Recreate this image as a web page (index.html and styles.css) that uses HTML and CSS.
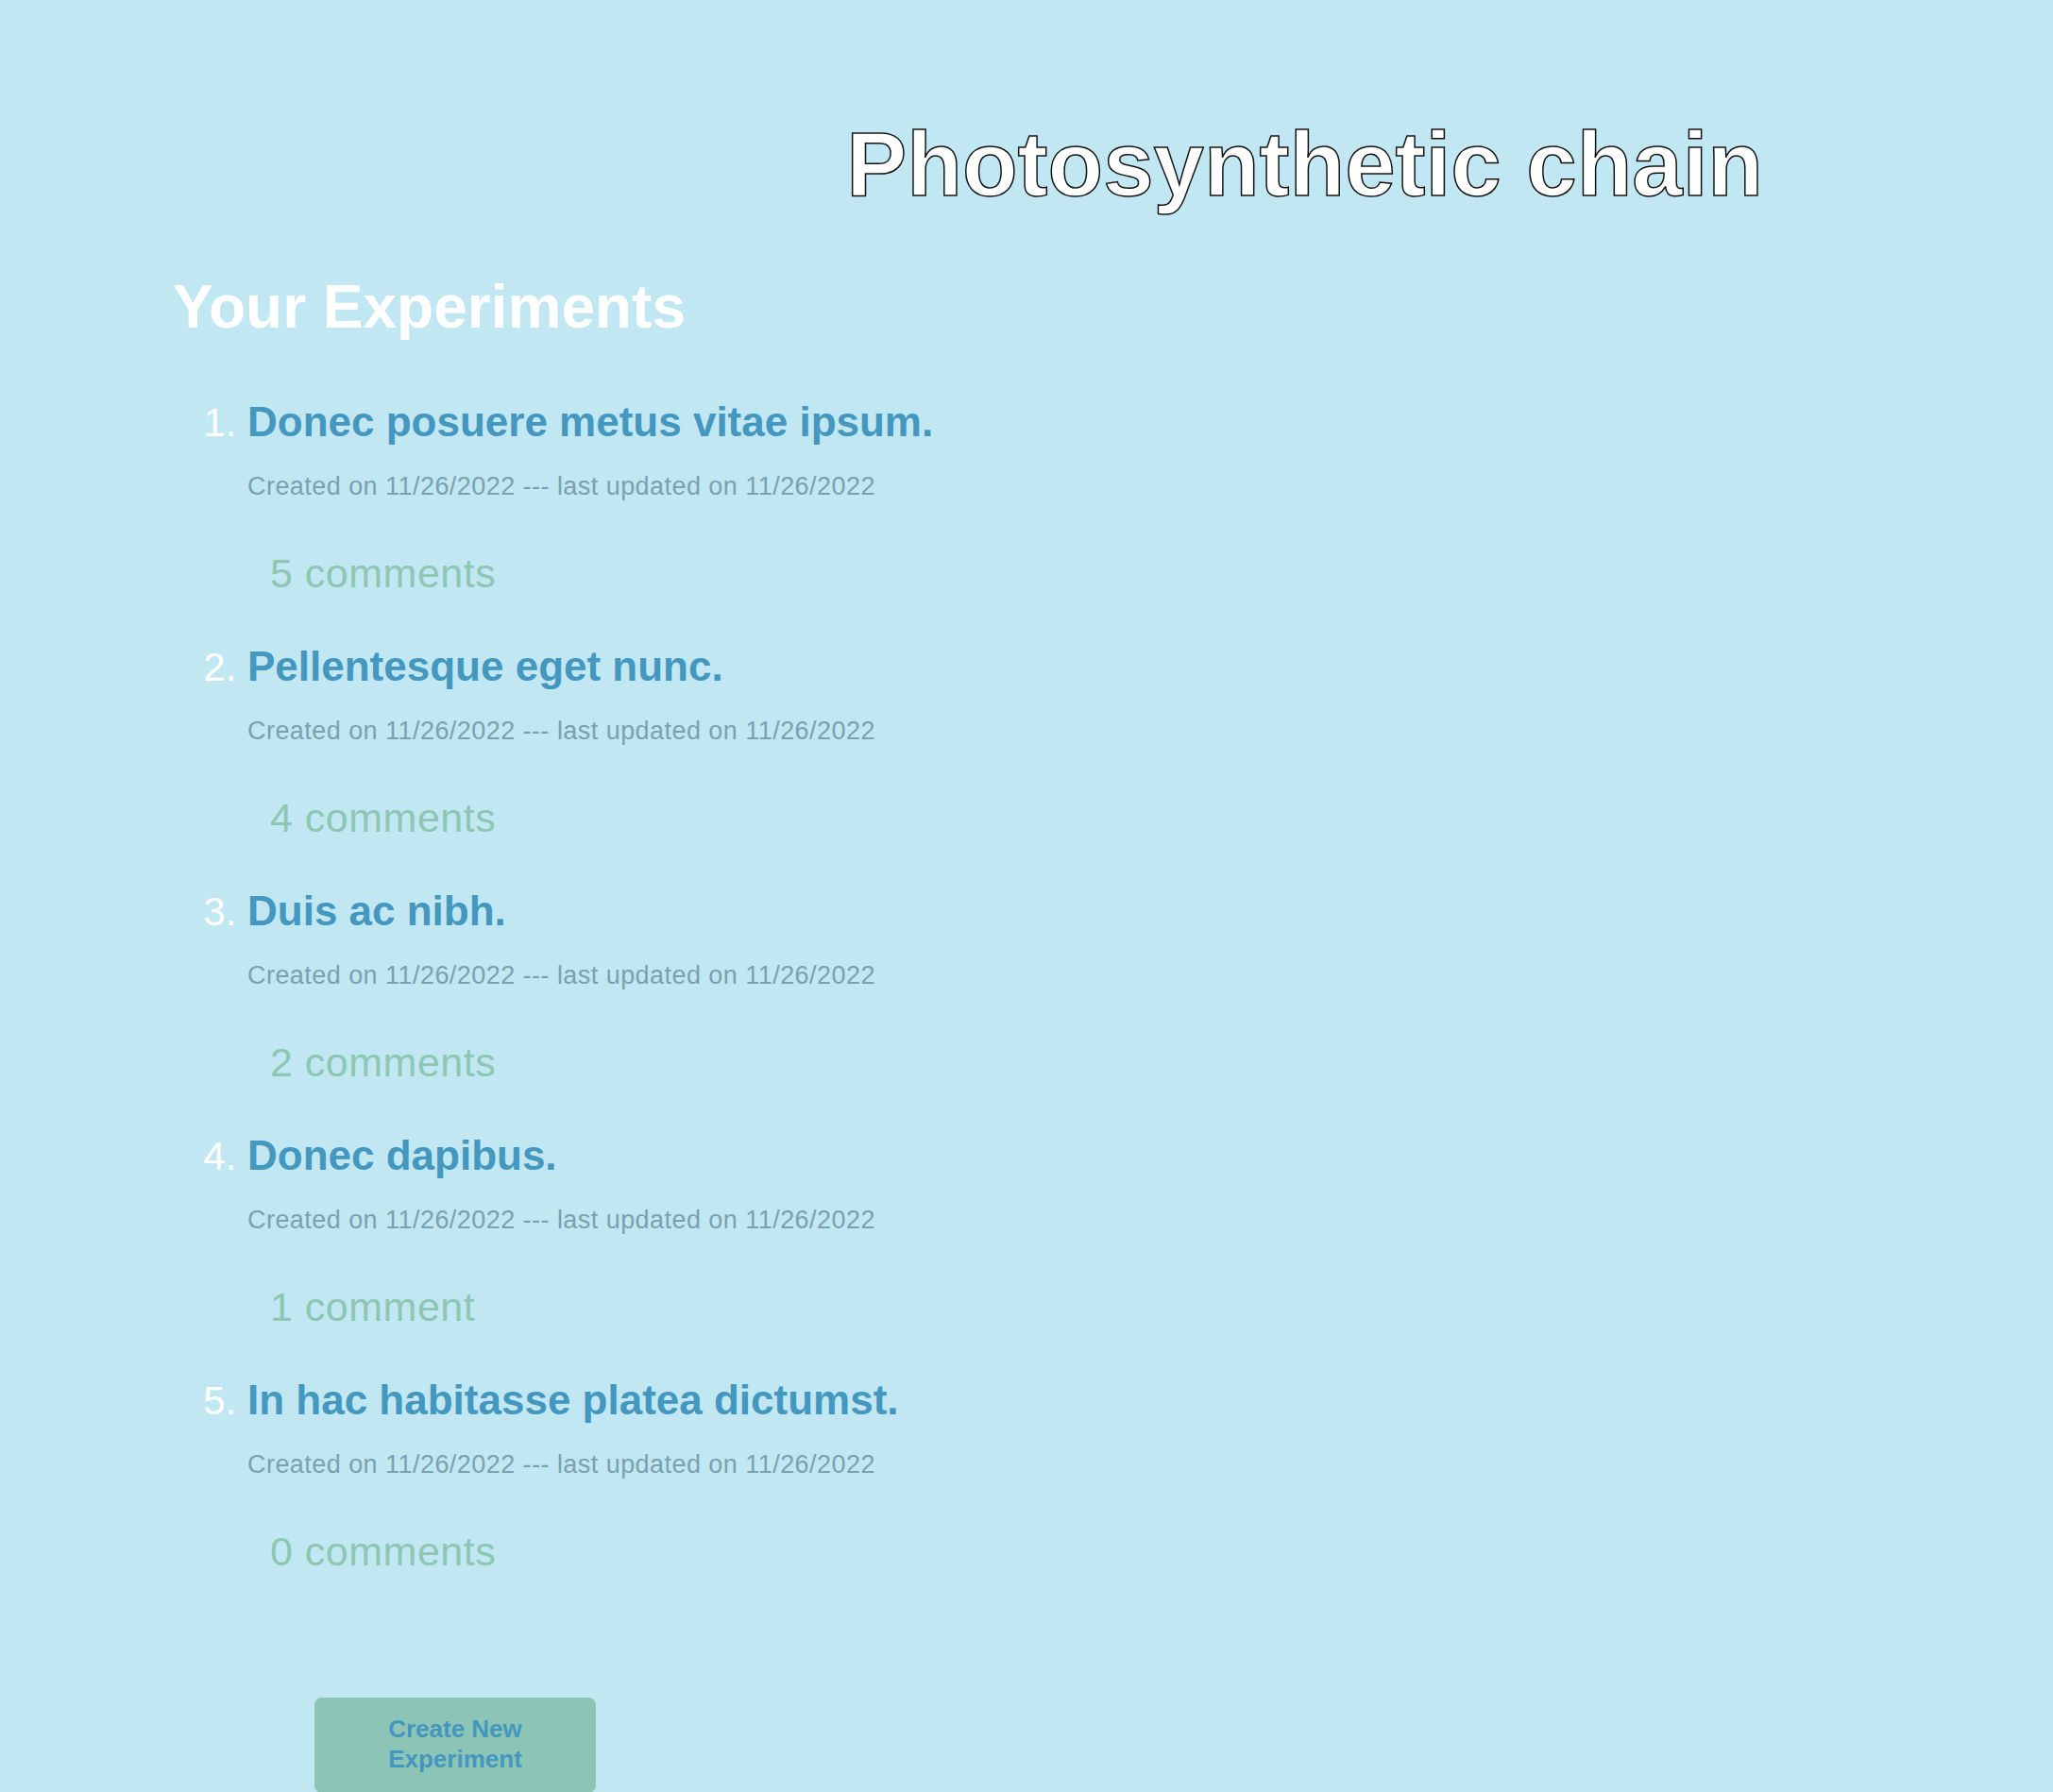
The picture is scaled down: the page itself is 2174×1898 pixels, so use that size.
FILE: index.html
```html
<!DOCTYPE html>
<html lang="en">
<head>
<meta charset="utf-8">
<title>Photosynthetic chain</title>
<link rel="stylesheet" href="styles.css">
</head>
<body>
<header class="top">
  <h1 class="site-title">Photosynthetic chain</h1>
</header>
<main class="content">
  <h2 class="section-title">Your Experiments</h2>
  <ol class="exp-list">
    <li class="exp">
      <h3 class="exp-title">Donec posuere metus vitae ipsum.</h3>
      <p class="exp-date">Created on 11/26/2022 --- last updated on 11/26/2022</p>
      <p class="exp-comments">5 comments</p>
    </li>
    <li class="exp">
      <h3 class="exp-title">Pellentesque eget nunc.</h3>
      <p class="exp-date">Created on 11/26/2022 --- last updated on 11/26/2022</p>
      <p class="exp-comments">4 comments</p>
    </li>
    <li class="exp">
      <h3 class="exp-title">Duis ac nibh.</h3>
      <p class="exp-date">Created on 11/26/2022 --- last updated on 11/26/2022</p>
      <p class="exp-comments">2 comments</p>
    </li>
    <li class="exp">
      <h3 class="exp-title">Donec dapibus.</h3>
      <p class="exp-date">Created on 11/26/2022 --- last updated on 11/26/2022</p>
      <p class="exp-comments">1 comment</p>
    </li>
    <li class="exp">
      <h3 class="exp-title">In hac habitasse platea dictumst.</h3>
      <p class="exp-date">Created on 11/26/2022 --- last updated on 11/26/2022</p>
      <p class="exp-comments">0 comments</p>
    </li>
  </ol>
  <div class="actions">
    <button class="create-btn" type="button">Create New Experiment</button>
  </div>
</main>
</body>
</html>
```
FILE: styles.css
```css
html, body {
  margin: 0;
  padding: 0;
  background: #c1e7f2;
  font-family: "Liberation Sans", Arial, sans-serif;
}

.top {
  display: flex;
  justify-content: flex-end;
  padding: 126px 307px 0 0;
}

.site-title {
  margin: 0;
  font-size: 96px;
  line-height: 1;
  font-weight: 700;
  color: #ffffff;
  -webkit-text-stroke: 1.5px #111111;
}

.content {
  padding: 71px 0 0 183px;
}

.section-title {
  margin: 0;
  font-size: 64px;
  line-height: 1;
  font-weight: 700;
  color: #ffffff;
}

.exp-list {
  margin: 68px 0 0;
  padding: 0 0 0 79px;
}

.exp {
  color: #ffffff;
  font-size: 44px;
  line-height: 1;
  margin-bottom: 56px;
}

.exp:last-child {
  margin-bottom: 0;
}

.exp::marker {
  color: #ffffff;
  font-size: 42px;
}

.exp-title {
  margin: 0;
  font-size: 44px;
  line-height: 44px;
  font-weight: 700;
  color: #4497bf;
}

.exp-date {
  margin: 32px 0 0;
  font-size: 27px;
  line-height: 28px;
  letter-spacing: 0.45px;
  color: #7aa1af;
}

.exp-comments {
  margin: 57px 0 0;
  padding-left: 24px;
  font-size: 43px;
  line-height: 42px;
  letter-spacing: 0.5px;
  color: #8dc6b3;
}

.actions {
  padding: 134px 0 0 150px;
}

.create-btn {
  width: 298px;
  padding: 17px 40px 20px;
  border: none;
  border-radius: 8px;
  background: #8cc4b6;
  color: #4497bf;
  font-family: "Liberation Sans", Arial, sans-serif;
  font-size: 26px;
  line-height: 32px;
  font-weight: 700;
  text-align: center;
}
```
